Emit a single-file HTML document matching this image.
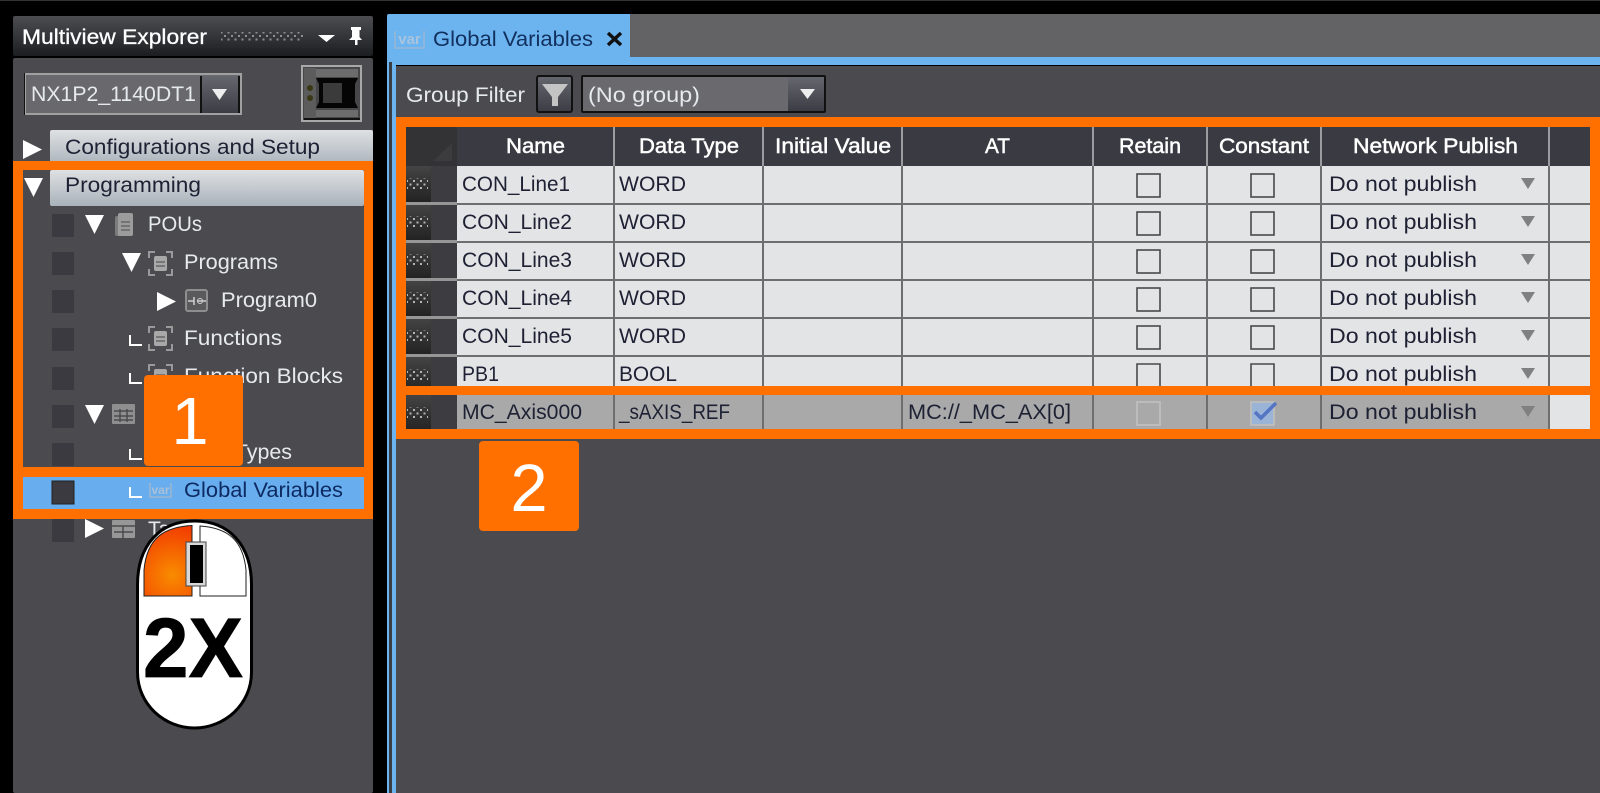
<!DOCTYPE html>
<html><head><meta charset="utf-8"><title>Global Variables</title>
<style>html,body{margin:0;padding:0;background:#000;overflow:hidden}svg{display:block}
text{font-family:"Liberation Sans",sans-serif;font-size:21px}
.l{fill:#e6eaee}.d{fill:#1d2133}.h{fill:#fff;stroke:#fff;stroke-width:.5}
</style></head><body>
<svg width="1600" height="793" viewBox="0 0 1600 793" xmlns="http://www.w3.org/2000/svg">
<defs>
<linearGradient id="hd" x1="0" y1="0" x2="0" y2="1"><stop offset="0" stop-color="#4d4d51"/><stop offset=".5" stop-color="#34363a"/><stop offset="1" stop-color="#1b1d1f"/></linearGradient>
<linearGradient id="sec" x1="0" y1="0" x2="0" y2="1"><stop offset="0" stop-color="#dfe1e3"/><stop offset="1" stop-color="#a9b2ba"/></linearGradient>
<linearGradient id="btn" x1="0" y1="0" x2="0" y2="1"><stop offset="0" stop-color="#66666e"/><stop offset="1" stop-color="#3c3c44"/></linearGradient>
<linearGradient id="rh" x1="0" y1="0" x2="0" y2="1"><stop offset="0" stop-color="#444"/><stop offset="1" stop-color="#222"/></linearGradient>
<radialGradient id="red" gradientUnits="userSpaceOnUse" cx="172" cy="575" r="50"><stop offset="0" stop-color="#f98c00"/><stop offset="1" stop-color="#f23c00"/></radialGradient>
<pattern id="dots" width="7" height="7" patternUnits="userSpaceOnUse"><rect x="0" y="0" width="2" height="2" fill="#b5b5b5"/><rect x="3.500" y="3.500" width="2" height="2" fill="#b5b5b5"/></pattern>
<g id="rhd"><rect x="406" width="25" height="37" fill="url(#rh)"/><rect x="431" width="26" height="37" fill="#3c3c41"/><rect x="407" y="12" width="21" height="11" fill="url(#dots)"/></g>
<path id="tr" d="M0 0H19L9.500 19Z" fill="#fff"/>
<path id="tri" d="M0 0L19 9.500L0 19Z" fill="#fff"/>
<path id="el" d="M0 0V10H12" fill="none" stroke="#fff" stroke-width="2"/>
<path id="ar" d="M0 0H14L7 11Z" fill="#808080"/>
<g id="fn"><path d="M0 6V0H6M17 0H23V6M23 17V23H17M6 23H0V17" fill="none" stroke="#9a9a9a" stroke-width="2"/><rect x="5" y="4" width="13" height="15" rx="2" fill="#a8a8a8"/><path d="M7 10H16M7 14H16" stroke="#666" stroke-width="1.500"/></g>
</defs>

<rect width="1600" height="793" fill="#000"/>
<rect width="1600" height="1" fill="#333"/>

<!-- left panel -->
<rect x="13" y="16" width="360" height="40" rx="2" fill="url(#hd)"/>
<rect x="13" y="58" width="360" height="735" rx="2" fill="#4b4a4f"/>
<text x="22" y="44" class="h" style="stroke-width:.3" textLength="185" lengthAdjust="spacingAndGlyphs">Multiview Explorer</text>
<rect x="221" y="32" width="82" height="9" fill="url(#dots)" opacity=".7"/>
<path d="M318 35H335L326.500 42Z" fill="#fff"/>
<path d="M351 27H361V30H359.500V37L362 40H357.500V45H355V40H349L352 37V30H351Z" fill="#fff"/>

<rect x="25" y="74" width="216" height="40" fill="#68686d" stroke="#a0a0a0" stroke-width="2"/>
<rect x="24" y="73" width="1" height="42" fill="#111"/>
<rect x="202" y="76" width="37" height="37" fill="url(#btn)"/>
<rect x="200" y="76" width="2" height="37" fill="#111"/><rect x="238" y="76" width="2" height="37" fill="#111"/>
<path d="M212 89H227L219.500 100Z" fill="#eee"/>
<text x="31" y="101" class="l" textLength="165" lengthAdjust="spacingAndGlyphs">NX1P2_1140DT1</text>

<rect x="302" y="66" width="59" height="55" fill="#474749" stroke="#a8a8a8" stroke-width="2"/>
<rect x="304" y="68" width="12" height="51" fill="#5c5c5c"/>
<rect x="316" y="69" width="42" height="8" fill="#6c6c6c"/><rect x="316" y="110" width="42" height="7" fill="#6c6c6c"/>
<path d="M316 78H358L355 84V102L358 108H316L319 102V84Z" fill="#050505"/>
<rect x="323" y="83" width="19" height="20" fill="#3b3b3b"/>
<circle cx="310" cy="88" r="3" fill="#3a3814"/><circle cx="310" cy="98" r="3" fill="#3a3814"/>
<rect x="304" y="118" width="56" height="2" fill="#111"/>

<use href="#tri" x="23" y="140"/>
<rect x="50" y="130" width="323" height="36" rx="2" fill="url(#sec)"/>
<text x="65" y="154" class="d" textLength="255" lengthAdjust="spacingAndGlyphs">Configurations and Setup</text>

<!-- orange box 1 -->
<rect x="13" y="161" width="360" height="358" fill="#ff7000"/>
<rect x="23" y="170" width="341" height="297" fill="#4b4a4f"/>
<rect x="23" y="477" width="341" height="32" fill="#68aeee"/>
<use href="#tr" x="24" y="178"/>
<rect x="50" y="170" width="314" height="36" rx="2" fill="url(#sec)"/>
<text x="65" y="192" class="d" textLength="136" lengthAdjust="spacingAndGlyphs">Programming</text>

<g fill="#3a3a40">
<rect x="52" y="214" width="22" height="23" rx="1"/>
<rect x="52" y="252" width="22" height="23" rx="1"/>
<rect x="52" y="290" width="22" height="23" rx="1"/>
<rect x="52" y="328" width="22" height="23" rx="1"/>
<rect x="52" y="367" width="22" height="23" rx="1"/>
<rect x="52" y="405" width="22" height="23" rx="1"/>
<rect x="52" y="443" width="22" height="23" rx="1"/>
<rect x="52" y="519" width="22" height="23" rx="1"/>
</g>
<rect x="52" y="481" width="22" height="23" fill="#3a3a40" stroke="#222" stroke-width="1"/>

<use href="#tr" x="85" y="215"/>
<rect x="115" y="216" width="8" height="20" rx="2" fill="#7c7c7c"/><rect x="118" y="213" width="15" height="23" rx="2" fill="#9c9c9c"/><path d="M121 222H130M121 226H130M121 230H130" stroke="#666" stroke-width="1.500"/>
<text x="148" y="231" class="l" textLength="54" lengthAdjust="spacingAndGlyphs">POUs</text>

<use href="#tr" x="122" y="253"/>
<use href="#fn" x="149" y="252"/>
<text x="184" y="269" class="l" textLength="94" lengthAdjust="spacingAndGlyphs">Programs</text>

<use href="#tri" x="157" y="292"/>
<rect x="186" y="290" width="21" height="21" rx="2" fill="#5a5a5c" stroke="#8e8e8e" stroke-width="2"/>
<path d="M188 301H194M201 301H206M194 297V305M197 301H201" stroke="#cfcfcf" stroke-width="1.500" fill="none"/><circle cx="200" cy="301" r="2.500" fill="none" stroke="#cfcfcf"/>
<text x="221" y="307" class="l" textLength="96" lengthAdjust="spacingAndGlyphs">Program0</text>

<use href="#el" x="130" y="335"/>
<use href="#fn" x="149" y="327"/>
<text x="184" y="345" class="l" textLength="98" lengthAdjust="spacingAndGlyphs">Functions</text>

<use href="#el" x="130" y="373"/>
<use href="#fn" x="149" y="365"/>
<text x="184" y="383" class="l" textLength="159" lengthAdjust="spacingAndGlyphs">Function Blocks</text>

<use href="#tr" x="85" y="405"/>
<rect x="112" y="404" width="23" height="20" rx="1" fill="#8e8e8e"/><path d="M114 411H133M114 416H133M114 420H133M120 409V422M127 409V422" stroke="#4b4a4f" stroke-width="1.500"/>

<use href="#el" x="130" y="449"/>
<text x="184" y="459" class="l" textLength="108" lengthAdjust="spacingAndGlyphs">Data Types</text>

<use href="#el" x="130" y="487"/>
<path d="M150 483V497H171V483M150 497H171" fill="none" stroke="#9cb6d0" stroke-width="1.500"/>
<text x="160.500" y="494" text-anchor="middle" style="font-size:12px;font-weight:700;fill:#a9c0d8">var</text>
<text x="184" y="497" fill="#0e2a62" textLength="159" lengthAdjust="spacingAndGlyphs">Global Variables</text>

<use href="#tri" x="85" y="519"/>
<rect x="112" y="520" width="23" height="18" rx="1" fill="#979797"/><path d="M112 526H135M123 526V538M114 532H133" stroke="#4b4a4f" stroke-width="1.500"/>
<text x="148" y="536" class="l">Tasks</text>

<!-- badge 1 -->
<rect x="144" y="375" width="99" height="91" rx="4" fill="#ff7000"/>
<text x="190" y="444" text-anchor="middle" fill="#fff" style="font-size:67px">1</text>

<!-- mouse -->
<path d="M194.500 521C160 521 137.500 545 137.500 585V672C137.500 705 165 728 194.500 728C224 728 251.500 705 251.500 672V585C251.500 545 229 521 194.500 521Z" fill="#fff" stroke="#000" stroke-width="3"/>
<path d="M192 525.500C165 527 147 537 144 570V596H192Z" fill="url(#red)" stroke="#222" stroke-width="1"/>
<path d="M200 526C228 528 243 540 246 570V596H200Z" fill="#fff" stroke="#222" stroke-width="1"/>
<rect x="186" y="542" width="20" height="44" fill="#d8d8d8" stroke="#444" stroke-width="1"/>
<rect x="190" y="545" width="13" height="38" fill="#000"/>
<text x="143" y="677" fill="#000" stroke="#000" stroke-width=".8" textLength="100" lengthAdjust="spacingAndGlyphs" style="font-size:84px;font-weight:700">2X</text>

<!-- right -->
<rect x="630" y="14" width="970" height="44" fill="#636365"/>
<path d="M387 16Q387 14 389 14H630V57H1600V65H396V793H387Z" fill="#6cb4f0"/>
<rect x="389" y="62" width="3" height="731" fill="#3a3d44"/>
<rect x="396" y="66" width="1204" height="727" fill="#4b4a4f"/>

<path d="M395 31V48H424V31" fill="none" stroke="#9ab6d2" stroke-width="1.500"/>
<text x="409.500" y="44" text-anchor="middle" style="font-size:15px;font-weight:700;fill:#a9c4de">var</text>
<text x="433" y="46" fill="#12305e" textLength="160" lengthAdjust="spacingAndGlyphs">Global Variables</text>
<path d="M608 33L621 45M621 33L608 45" stroke="#111" stroke-width="3.500"/>

<text x="406" y="102" class="l" textLength="119" lengthAdjust="spacingAndGlyphs">Group Filter</text>
<rect x="537" y="76" width="35" height="36" rx="2" fill="url(#btn)" stroke="#111" stroke-width="2"/>
<path d="M542 84H568L558 97V106H552V97Z" fill="#c4c4c4"/>
<rect x="582" y="76" width="243" height="36" rx="1" fill="#69696e" stroke="#111" stroke-width="2"/>
<rect x="788" y="77" width="36" height="34" fill="url(#btn)"/>
<path d="M800 89H815L807.500 99Z" fill="#eee"/>
<text x="588" y="102" class="l" textLength="112" lengthAdjust="spacingAndGlyphs">(No group)</text>

<!-- orange box 2 -->
<rect x="396" y="117" width="1204" height="322" fill="#ff7000"/>
<!-- header -->
<rect x="406" y="127" width="1184" height="39" fill="#3a3a42"/>
<rect x="406" y="127" width="51" height="39" fill="#333335"/>
<path d="M452 143V161H433Z" fill="#3c3c3e"/>
<g>
<text x="506" y="153" class="h" textLength="59" lengthAdjust="spacingAndGlyphs">Name</text>
<text x="639" y="153" class="h" textLength="100" lengthAdjust="spacingAndGlyphs">Data Type</text>
<text x="775" y="153" class="h" textLength="116" lengthAdjust="spacingAndGlyphs">Initial Value</text>
<text x="985" y="153" class="h" textLength="25" lengthAdjust="spacingAndGlyphs">AT</text>
<text x="1119" y="153" class="h" textLength="62" lengthAdjust="spacingAndGlyphs">Retain</text>
<text x="1219" y="153" class="h" textLength="90" lengthAdjust="spacingAndGlyphs">Constant</text>
<text x="1353" y="153" class="h" textLength="165" lengthAdjust="spacingAndGlyphs">Network Publish</text>
</g>

<!-- body rows -->
<rect x="457" y="166" width="1133" height="220" fill="#e3e4e6"/>
<use href="#rhd" y="166"/><use href="#rhd" y="204"/><use href="#rhd" y="242"/><use href="#rhd" y="280"/><use href="#rhd" y="318"/>
<svg x="406" y="357" width="51" height="29" overflow="hidden"><use href="#rhd" x="-406" y="0"/></svg>
<g fill="#6e6e6e">
<rect x="457" y="203" width="1133" height="2"/><rect x="457" y="241" width="1133" height="2"/><rect x="457" y="279" width="1133" height="2"/><rect x="457" y="317" width="1133" height="2"/><rect x="457" y="355" width="1133" height="2"/>
</g>
<g fill="#969696">
<rect x="406" y="202" width="51" height="3"/><rect x="406" y="240" width="51" height="3"/><rect x="406" y="278" width="51" height="3"/><rect x="406" y="316" width="51" height="3"/><rect x="406" y="354" width="51" height="3"/>
</g>

<!-- MC row -->
<rect x="457" y="395" width="1092" height="34" fill="#a9a9a9"/>
<rect x="1550" y="395" width="40" height="34" fill="#e3e4e6"/>
<svg x="406" y="395" width="51" height="34" overflow="hidden"><use href="#rhd" x="-406" y="0"/></svg>

<!-- column lines -->
<g fill="#6e6e6e">
<rect x="613" y="166" width="2" height="220"/><rect x="762" y="166" width="2" height="220"/><rect x="901" y="166" width="2" height="220"/><rect x="1092" y="166" width="2" height="220"/><rect x="1206" y="166" width="2" height="220"/><rect x="1320" y="166" width="2" height="220"/><rect x="1548" y="166" width="2" height="220"/>
<rect x="613" y="395" width="2" height="34"/><rect x="762" y="395" width="2" height="34"/><rect x="901" y="395" width="2" height="34"/><rect x="1092" y="395" width="2" height="34"/><rect x="1206" y="395" width="2" height="34"/><rect x="1320" y="395" width="2" height="34"/><rect x="1548" y="395" width="2" height="34"/>
</g>
<g fill="#9c9ca0">
<rect x="613" y="127" width="2" height="39"/><rect x="762" y="127" width="2" height="39"/><rect x="901" y="127" width="2" height="39"/><rect x="1092" y="127" width="2" height="39"/><rect x="1206" y="127" width="2" height="39"/><rect x="1320" y="127" width="2" height="39"/><rect x="1548" y="127" width="2" height="39"/>
</g>

<g>
<text x="462" y="191" class="d" textLength="108" lengthAdjust="spacingAndGlyphs">CON_Line1</text><text x="619" y="191" class="d" textLength="67" lengthAdjust="spacingAndGlyphs">WORD</text>
<text x="462" y="229" class="d" textLength="110" lengthAdjust="spacingAndGlyphs">CON_Line2</text><text x="619" y="229" class="d" textLength="67" lengthAdjust="spacingAndGlyphs">WORD</text>
<text x="462" y="267" class="d" textLength="110" lengthAdjust="spacingAndGlyphs">CON_Line3</text><text x="619" y="267" class="d" textLength="67" lengthAdjust="spacingAndGlyphs">WORD</text>
<text x="462" y="305" class="d" textLength="110" lengthAdjust="spacingAndGlyphs">CON_Line4</text><text x="619" y="305" class="d" textLength="67" lengthAdjust="spacingAndGlyphs">WORD</text>
<text x="462" y="343" class="d" textLength="110" lengthAdjust="spacingAndGlyphs">CON_Line5</text><text x="619" y="343" class="d" textLength="67" lengthAdjust="spacingAndGlyphs">WORD</text>
<text x="462" y="381" class="d" textLength="37" lengthAdjust="spacingAndGlyphs">PB1</text><text x="619" y="381" class="d" textLength="58" lengthAdjust="spacingAndGlyphs">BOOL</text>
<text x="462" y="419" class="d" textLength="120" lengthAdjust="spacingAndGlyphs">MC_Axis000</text><text x="619" y="419" class="d" textLength="111" lengthAdjust="spacingAndGlyphs">_sAXIS_REF</text><text x="908" y="419" class="d" textLength="163" lengthAdjust="spacingAndGlyphs">MC://_MC_AX[0]</text>
</g>
<g>
<text x="1329" y="191" class="d" textLength="148" lengthAdjust="spacingAndGlyphs">Do not publish</text>
<text x="1329" y="229" class="d" textLength="148" lengthAdjust="spacingAndGlyphs">Do not publish</text>
<text x="1329" y="267" class="d" textLength="148" lengthAdjust="spacingAndGlyphs">Do not publish</text>
<text x="1329" y="305" class="d" textLength="148" lengthAdjust="spacingAndGlyphs">Do not publish</text>
<text x="1329" y="343" class="d" textLength="148" lengthAdjust="spacingAndGlyphs">Do not publish</text>
<text x="1329" y="381" class="d" textLength="148" lengthAdjust="spacingAndGlyphs">Do not publish</text>
<text x="1329" y="419" class="d" textLength="148" lengthAdjust="spacingAndGlyphs">Do not publish</text>
</g>
<use href="#ar" x="1521" y="178"/><use href="#ar" x="1521" y="216"/><use href="#ar" x="1521" y="254"/><use href="#ar" x="1521" y="292"/><use href="#ar" x="1521" y="330"/><use href="#ar" x="1521" y="368"/><use href="#ar" x="1521" y="406"/>

<g fill="none" stroke="#4a4a4a" stroke-width="1.600">
<rect x="1137" y="174" width="23" height="23"/><rect x="1251" y="174" width="23" height="23"/>
<rect x="1137" y="212" width="23" height="23"/><rect x="1251" y="212" width="23" height="23"/>
<rect x="1137" y="250" width="23" height="23"/><rect x="1251" y="250" width="23" height="23"/>
<rect x="1137" y="288" width="23" height="23"/><rect x="1251" y="288" width="23" height="23"/>
<rect x="1137" y="326" width="23" height="23"/><rect x="1251" y="326" width="23" height="23"/>
<path d="M1137 386V364H1160V386M1251 386V364H1274V386"/>
</g>
<rect x="1137" y="402" width="23" height="23" fill="none" stroke="#bcbcbc" stroke-width="2"/>
<rect x="1251" y="402" width="23" height="23" fill="#9ab4d8" stroke="#bcbcbc" stroke-width="2"/>
<path d="M1255 412L1261 418L1276 403" fill="none" stroke="#5474c4" stroke-width="3.500"/>

<!-- badge 2 -->
<rect x="479" y="441" width="100" height="90" rx="4" fill="#ff7000"/>
<text x="529" y="511" text-anchor="middle" fill="#fff" style="font-size:67px">2</text>
</svg>
</body></html>
